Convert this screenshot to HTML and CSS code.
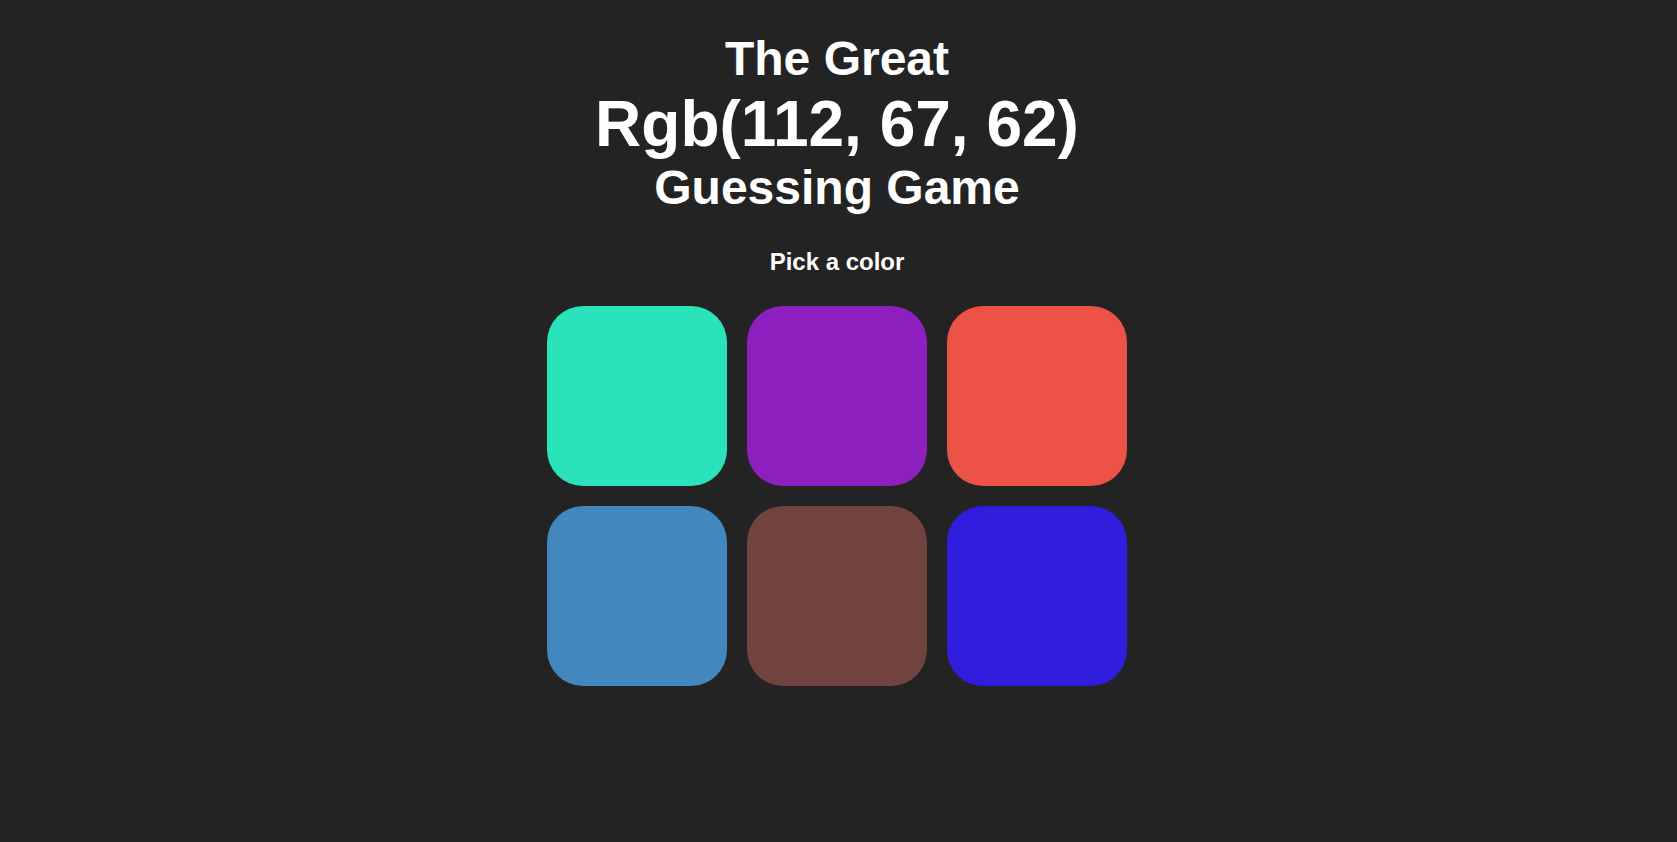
FILE: index.html
```html
<!DOCTYPE html>
<html lang="en">
<head>
<meta charset="utf-8">
<title>The Great RGB Guessing Game</title>
<link rel="stylesheet" href="styles.css">
</head>
<body>
<header class="header">
  <h1 class="title">
    <span class="title-line">The Great</span>
    <span class="title-rgb">Rgb(112, 67, 62)</span>
    <span class="title-game">Guessing Game</span>
  </h1>
</header>
<main class="board">
  <p class="message">Pick a color</p>
  <div class="grid">
    <div class="square sq-teal"></div>
    <div class="square sq-purple"></div>
    <div class="square sq-red"></div>
    <div class="square sq-steel"></div>
    <div class="square sq-brown"></div>
    <div class="square sq-blue"></div>
  </div>
</main>
</body>
</html>
```
FILE: styles.css
```css
html, body {
  margin: 0;
  padding: 0;
}
body {
  background: #232323;
  color: #ffffff;
  font-family: "Liberation Sans", Arial, sans-serif;
  font-weight: bold;
  text-align: center;
  padding-right: 3px;
}
.header {
  padding-top: 31px;
}
.title {
  margin: 0;
  font-weight: bold;
}
.title-line {
  display: block;
  font-size: 48px;
  line-height: 55px;
}
.title-rgb {
  display: block;
  font-size: 64px;
  line-height: 77px;
}
.title-game {
  display: block;
  font-size: 48px;
  line-height: 49px;
}
.board {
  display: flex;
  flex-direction: column;
  align-items: center;
}
.message {
  margin: 0;
  padding-top: 37px;
  font-size: 24px;
  line-height: 26px;
}
.grid {
  margin-top: 31px;
  display: grid;
  grid-template-columns: repeat(3, 180px);
  gap: 20px;
}
.square {
  width: 180px;
  height: 180px;
  border-radius: 36px;
}
.sq-teal { background: #2be3ba; }
.sq-purple { background: #8e1fbf; }
.sq-red { background: #ec5245; }
.sq-steel { background: #4287bd; }
.sq-brown { background: #70433e; }
.sq-blue { background: #301ddd; }
```
